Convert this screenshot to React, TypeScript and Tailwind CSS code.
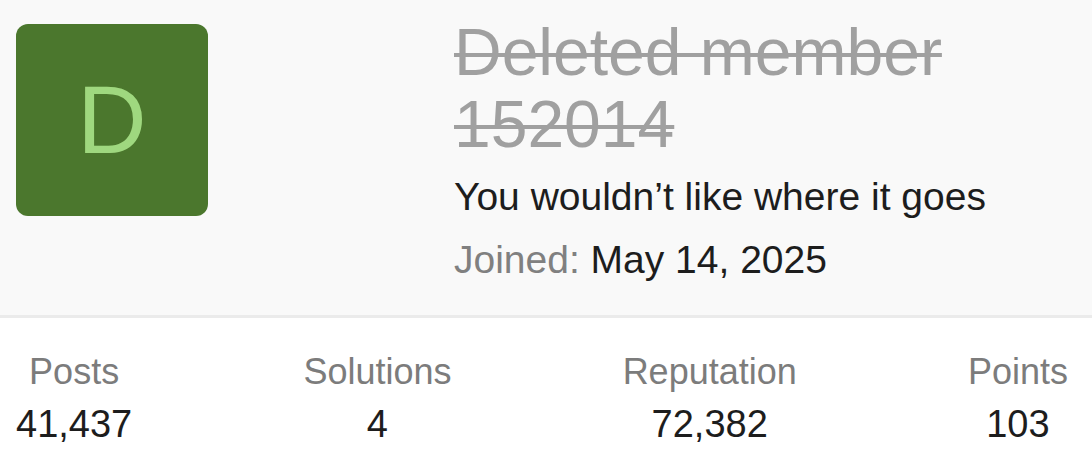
import React from "react";

const stats = [
  { label: "Posts", value: "41,437" },
  { label: "Solutions", value: "4" },
  { label: "Reputation", value: "72,382" },
  { label: "Points", value: "103" },
];

export default function App() {
  return (
    <div className="w-[1092px] h-[463px] bg-white overflow-hidden font-['Liberation_Sans',Arial,sans-serif]">
      {/* profile header */}
      <div className="flex bg-[#f9f9f9] border-b-[3px] border-[#ebebeb] pl-4 pr-4 pt-4 pb-8">
        <div className="mt-2 w-[192px] h-[192px] shrink-0 rounded-[12px] bg-[#4b772d] flex items-center justify-center">
          <span className="text-[96px] leading-none text-[#9fd87f]">D</span>
        </div>
        <div className="ml-[246px] flex-1 min-w-0">
          <h1 className="text-[66px] leading-[72px] text-[#a0a0a0] line-through decoration-4">
            Deleted member 152014
          </h1>
          <p className="mt-[14px] text-[39px] leading-[46px] text-[#1d1d1d]">
            You wouldn’t like where it goes
          </p>
          <p className="mt-[17px] text-[39px] leading-[46px] text-[#1d1d1d]">
            <span className="text-[#808080]">Joined:</span> May 14, 2025
          </p>
        </div>
      </div>

      {/* stats row */}
      <div className="flex justify-between pl-4 pr-6 pt-[33px]">
        {stats.map((s) => (
          <div key={s.label} className="flex flex-col items-center">
            <span className="text-[36px] leading-[42px] text-[#7c7c7c]">{s.label}</span>
            <span className="mt-[9px] text-[38px] leading-[44px] text-[#1d1d1d]">{s.value}</span>
          </div>
        ))}
      </div>
    </div>
  );
}
